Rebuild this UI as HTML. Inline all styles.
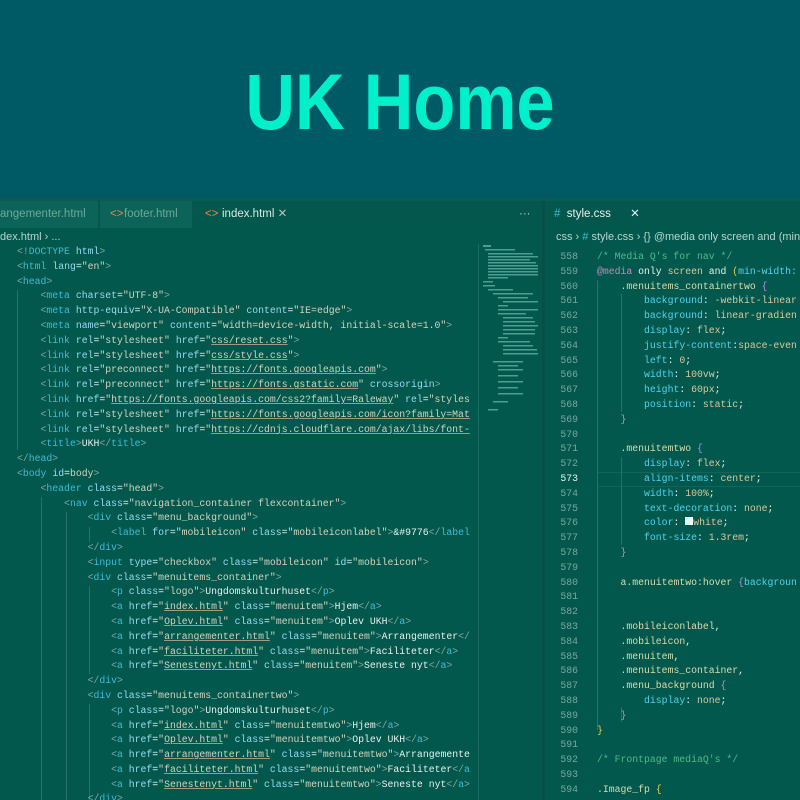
<!DOCTYPE html>
<html style="overflow:hidden;width:800px;height:800px"><head><meta charset="utf-8"><style>
*{margin:0;padding:0;box-sizing:border-box}
body{width:800px;height:800px;overflow:hidden;background:#03584d;position:relative;font-family:"Liberation Sans",sans-serif}
#top{position:absolute;left:0;top:0;width:800px;height:198px;background:#005a66}
#title{position:absolute;left:0;top:52px;width:800px;text-align:center;color:#00f0cc;font-weight:bold;font-size:79px;line-height:100px;transform:scaleX(0.87)}
#sep{position:absolute;left:0;top:198px;width:800px;height:3px;background:#0b5a55}
.tab{position:absolute;top:201px;height:27px;font-size:11.5px;line-height:27px;color:#7fb2a6;white-space:nowrap;overflow:hidden}
.crumb{position:absolute;top:229px;font-size:11px;line-height:16px;color:#b8d4cc;white-space:nowrap}
.code{position:absolute;font-family:"Liberation Mono",monospace;font-size:9.8px;line-height:14.8px;white-space:pre;color:#e8f0ec;overflow:hidden}
.b{color:#7fa8a2}.t{color:#3cbcd8}.a{color:#9ad8f0}.s{color:#d4d2bc}.u{color:#d4d2bc;text-decoration:underline;text-decoration-color:#a09a80}
.p{color:#4fd2ee}.v{color:#d8c89a}.sel{color:#d8dcaa}.c{color:#4fba86}.k{color:#c586c0}.y{color:#e6d040}.pu{color:#b58ad8}
.ln{position:absolute;left:545px;width:33px;text-align:right;font-family:"Liberation Mono",monospace;font-size:9.8px;line-height:14.8px;color:#7ba59c;white-space:pre}
.g{position:absolute;width:1px;background:#2a7066}
</style></head><body>
<div id="top"></div><div id="title">UK Home</div><div id="sep"></div>
<div style="position:absolute;left:0;top:201px;width:800px;height:27px;background:#04574c"></div>
<div class="tab" style="left:0;width:98px;background:#0b6457;color:#6fa89a">angementer.html</div>
<div class="tab" style="left:100px;width:92px;background:#0b6457;padding-left:24px;color:#6fa89a"><span style="color:#e08a4a;position:absolute;left:10px">&lt;&gt;</span>footer.html</div>
<div class="tab" style="left:195px;width:95px;padding-left:27px;color:#d8e8e2"><span style="color:#e08a4a;position:absolute;left:10px">&lt;&gt;</span>index.html <span style="color:#b0c8c0">&#10005;</span></div>
<div class="tab" style="left:519px;color:#b0c8c0">···</div>
<div style="position:absolute;left:542px;top:201px;width:3px;height:599px;background:#0a4f46"></div>
<div class="tab" style="left:554px;color:#e8f0ec"><span style="color:#3cbcd8">#</span>&nbsp; style.css &nbsp;&nbsp;&nbsp;&nbsp;&nbsp;<span style="color:#e8f0ec">&#10005;</span></div>
<div class="crumb" style="left:0">dex.html › ...</div>
<div class="crumb" style="left:556px">css › <span style="color:#3cbcd8">#</span> style.css › {} @media only screen and (min-</div>
<div style="position:absolute;left:478px;top:244px;width:1px;height:556px;background:#1d6b60"></div>
<svg style="position:absolute;left:483px;top:245px" width="55" height="170"><g fill="#4d9d90">
<rect x="0" y="0" width="8" height="2"/><rect x="2" y="4" width="30" height="1.5"/><rect x="5" y="8" width="45" height="1.5"/><rect x="5" y="11" width="50" height="1.5"/><rect x="5" y="14" width="42" height="1.5"/><rect x="5" y="17" width="48" height="1.5"/><rect x="5" y="20" width="50" height="1.5"/><rect x="5" y="23" width="50" height="1.5"/><rect x="5" y="26" width="50" height="1.5"/><rect x="5" y="29" width="50" height="1.5"/><rect x="5" y="32" width="20" height="1.5"/><rect x="0" y="36" width="10" height="1.5"/><rect x="0" y="40" width="12" height="1.5"/><rect x="5" y="44" width="25" height="1.5"/><rect x="10" y="48" width="40" height="1.5"/><rect x="15" y="52" width="30" height="1.5"/><rect x="20" y="56" width="50" height="1.5"/><rect x="15" y="60" width="10" height="1.5"/><rect x="15" y="64" width="42" height="1.5"/><rect x="15" y="68" width="28" height="1.5"/><rect x="20" y="72" width="30" height="1.5"/><rect x="20" y="76" width="32" height="1.5"/><rect x="20" y="80" width="36" height="1.5"/><rect x="20" y="84" width="32" height="1.5"/><rect x="20" y="88" width="32" height="1.5"/><rect x="15" y="92" width="10" height="1.5"/><rect x="15" y="96" width="32" height="1.5"/><rect x="20" y="100" width="30" height="1.5"/><rect x="20" y="104" width="34" height="1.5"/><rect x="20" y="108" width="36" height="1.5"/><rect x="10" y="116" width="30" height="1.5"/><rect x="15" y="120" width="20" height="1.5"/><rect x="15" y="124" width="25" height="1.5"/><rect x="15" y="130" width="20" height="1.5"/><rect x="15" y="136" width="25" height="1.5"/><rect x="15" y="142" width="20" height="1.5"/><rect x="15" y="148" width="25" height="1.5"/><rect x="10" y="156" width="15" height="1.5"/><rect x="5" y="164" width="10" height="1.5"/></g></svg>
<div class="g" style="left:17px;top:290px;height:160px"></div>
<div class="g" style="left:41px;top:497px;height:303px"></div>
<div class="g" style="left:66px;top:512px;height:288px"></div>
<div class="g" style="left:89px;top:527px;height:15px"></div>
<div class="g" style="left:89px;top:586px;height:88px"></div>
<div class="g" style="left:89px;top:704px;height:96px"></div>
<div class="code" style="left:17px;top:245px;width:461px;height:555px"><span class="b">&lt;!</span><span class="t">DOCTYPE</span> <span class="a">html</span><span class="b">&gt;</span>
<span class="b">&lt;</span><span class="t">html</span> <span class="a">lang</span>=<span class="s">"en"</span><span class="b">&gt;</span>
<span class="b">&lt;</span><span class="t">head</span><span class="b">&gt;</span>
    <span class="b">&lt;</span><span class="t">meta</span> <span class="a">charset</span>=<span class="s">"UTF-8"</span><span class="b">&gt;</span>
    <span class="b">&lt;</span><span class="t">meta</span> <span class="a">http-equiv</span>=<span class="s">"X-UA-Compatible"</span> <span class="a">content</span>=<span class="s">"IE=edge"</span><span class="b">&gt;</span>
    <span class="b">&lt;</span><span class="t">meta</span> <span class="a">name</span>=<span class="s">"viewport"</span> <span class="a">content</span>=<span class="s">"width=device-width, initial-scale=1.0"</span><span class="b">&gt;</span>
    <span class="b">&lt;</span><span class="t">link</span> <span class="a">rel</span>=<span class="s">"stylesheet"</span> <span class="a">href</span>=<span class="s">"<span class="u">css/reset.css</span>"</span><span class="b">&gt;</span>
    <span class="b">&lt;</span><span class="t">link</span> <span class="a">rel</span>=<span class="s">"stylesheet"</span> <span class="a">href</span>=<span class="s">"<span class="u">css/style.css</span>"</span><span class="b">&gt;</span>
    <span class="b">&lt;</span><span class="t">link</span> <span class="a">rel</span>=<span class="s">"preconnect"</span> <span class="a">href</span>=<span class="s">"<span class="u">https://fonts.googleapis.com</span>"</span><span class="b">&gt;</span>
    <span class="b">&lt;</span><span class="t">link</span> <span class="a">rel</span>=<span class="s">"preconnect"</span> <span class="a">href</span>=<span class="s">"<span class="u">https://fonts.gstatic.com</span>"</span> <span class="a">crossorigin</span><span class="b">&gt;</span>
    <span class="b">&lt;</span><span class="t">link</span> <span class="a">href</span>=<span class="s">"<span class="u">https://fonts.googleapis.com/css2?family=Raleway</span>"</span> <span class="a">rel</span>=<span class="s">"styles</span>
    <span class="b">&lt;</span><span class="t">link</span> <span class="a">rel</span>=<span class="s">"stylesheet"</span> <span class="a">href</span>=<span class="s">"<span class="u">https://fonts.googleapis.com/icon?family=Mat</span></span>
    <span class="b">&lt;</span><span class="t">link</span> <span class="a">rel</span>=<span class="s">"stylesheet"</span> <span class="a">href</span>=<span class="s">"<span class="u">https://cdnjs.cloudflare.com/ajax/libs/font-</span></span>
    <span class="b">&lt;</span><span class="t">title</span><span class="b">&gt;</span>UKH<span class="b">&lt;/</span><span class="t">title</span><span class="b">&gt;</span>
<span class="b">&lt;/</span><span class="t">head</span><span class="b">&gt;</span>
<span class="b">&lt;</span><span class="t">body</span> <span class="a">id</span>=<span class="s">body</span><span class="b">&gt;</span>
    <span class="b">&lt;</span><span class="t">header</span> <span class="a">class</span>=<span class="s">"head"</span><span class="b">&gt;</span>
        <span class="b">&lt;</span><span class="t">nav</span> <span class="a">class</span>=<span class="s">"navigation_container flexcontainer"</span><span class="b">&gt;</span>
            <span class="b">&lt;</span><span class="t">div</span> <span class="a">class</span>=<span class="s">"menu_background"</span><span class="b">&gt;</span>
                <span class="b">&lt;</span><span class="t">label</span> <span class="a">for</span>=<span class="s">"mobileicon"</span> <span class="a">class</span>=<span class="s">"mobileiconlabel"</span><span class="b">&gt;</span>&amp;#9776<span class="b">&lt;/</span><span class="t">label</span>
            <span class="b">&lt;/</span><span class="t">div</span><span class="b">&gt;</span>
            <span class="b">&lt;</span><span class="t">input</span> <span class="a">type</span>=<span class="s">"checkbox"</span> <span class="a">class</span>=<span class="s">"mobileicon"</span> <span class="a">id</span>=<span class="s">"mobileicon"</span><span class="b">&gt;</span>
            <span class="b">&lt;</span><span class="t">div</span> <span class="a">class</span>=<span class="s">"menuitems_container"</span><span class="b">&gt;</span>
                <span class="b">&lt;</span><span class="t">p</span> <span class="a">class</span>=<span class="s">"logo"</span><span class="b">&gt;</span>Ungdomskulturhuset<span class="b">&lt;/</span><span class="t">p</span><span class="b">&gt;</span>
                <span class="b">&lt;</span><span class="t">a</span> <span class="a">href</span>=<span class="s">"<span class="u">index.html</span>"</span> <span class="a">class</span>=<span class="s">"menuitem"</span><span class="b">&gt;</span>Hjem<span class="b">&lt;/</span><span class="t">a</span><span class="b">&gt;</span>
                <span class="b">&lt;</span><span class="t">a</span> <span class="a">href</span>=<span class="s">"<span class="u">Oplev.html</span>"</span> <span class="a">class</span>=<span class="s">"menuitem"</span><span class="b">&gt;</span>Oplev UKH<span class="b">&lt;/</span><span class="t">a</span><span class="b">&gt;</span>
                <span class="b">&lt;</span><span class="t">a</span> <span class="a">href</span>=<span class="s">"<span class="u">arrangementer.html</span>"</span> <span class="a">class</span>=<span class="s">"menuitem"</span><span class="b">&gt;</span>Arrangementer<span class="b">&lt;/</span>
                <span class="b">&lt;</span><span class="t">a</span> <span class="a">href</span>=<span class="s">"<span class="u">faciliteter.html</span>"</span> <span class="a">class</span>=<span class="s">"menuitem"</span><span class="b">&gt;</span>Faciliteter<span class="b">&lt;/</span><span class="t">a</span><span class="b">&gt;</span>
                <span class="b">&lt;</span><span class="t">a</span> <span class="a">href</span>=<span class="s">"<span class="u">Senestenyt.html</span>"</span> <span class="a">class</span>=<span class="s">"menuitem"</span><span class="b">&gt;</span>Seneste nyt<span class="b">&lt;/</span><span class="t">a</span><span class="b">&gt;</span>
            <span class="b">&lt;/</span><span class="t">div</span><span class="b">&gt;</span>
            <span class="b">&lt;</span><span class="t">div</span> <span class="a">class</span>=<span class="s">"menuitems_containertwo"</span><span class="b">&gt;</span>
                <span class="b">&lt;</span><span class="t">p</span> <span class="a">class</span>=<span class="s">"logo"</span><span class="b">&gt;</span>Ungdomskulturhuset<span class="b">&lt;/</span><span class="t">p</span><span class="b">&gt;</span>
                <span class="b">&lt;</span><span class="t">a</span> <span class="a">href</span>=<span class="s">"<span class="u">index.html</span>"</span> <span class="a">class</span>=<span class="s">"menuitemtwo"</span><span class="b">&gt;</span>Hjem<span class="b">&lt;/</span><span class="t">a</span><span class="b">&gt;</span>
                <span class="b">&lt;</span><span class="t">a</span> <span class="a">href</span>=<span class="s">"<span class="u">Oplev.html</span>"</span> <span class="a">class</span>=<span class="s">"menuitemtwo"</span><span class="b">&gt;</span>Oplev UKH<span class="b">&lt;/</span><span class="t">a</span><span class="b">&gt;</span>
                <span class="b">&lt;</span><span class="t">a</span> <span class="a">href</span>=<span class="s">"<span class="u">arrangementer.html</span>"</span> <span class="a">class</span>=<span class="s">"menuitemtwo"</span><span class="b">&gt;</span>Arrangemente
                <span class="b">&lt;</span><span class="t">a</span> <span class="a">href</span>=<span class="s">"<span class="u">faciliteter.html</span>"</span> <span class="a">class</span>=<span class="s">"menuitemtwo"</span><span class="b">&gt;</span>Faciliteter<span class="b">&lt;/</span><span class="t">a</span>
                <span class="b">&lt;</span><span class="t">a</span> <span class="a">href</span>=<span class="s">"<span class="u">Senestenyt.html</span>"</span> <span class="a">class</span>=<span class="s">"menuitemtwo"</span><span class="b">&gt;</span>Seneste nyt<span class="b">&lt;/</span><span class="t">a</span><span class="b">&gt;</span>
            <span class="b">&lt;/</span><span class="t">div</span><span class="b">&gt;</span></div>
<div class="ln" style="top:250px">558
559
560
561
562
563
564
565
566
567
568
569
570
571
572
<span style="color:#e8f0ec">573</span>
574
575
576
577
578
579
580
581
582
583
584
585
586
587
588
589
590
591
592
593
594</div>
<div style="position:absolute;left:597px;top:472px;width:203px;height:15px;border-top:1px solid #0e6659;border-bottom:1px solid #0e6659"></div>
<div class="g" style="left:597px;top:280px;height:450px"></div>
<div class="g" style="left:621px;top:294px;height:118px"></div>
<div class="g" style="left:621px;top:457px;height:88px"></div>
<div class="g" style="left:621px;top:707px;height:15px"></div>
<div class="code" style="left:597px;top:250px;width:203px;height:550px"><span class="c">/* Media Q's for nav */</span>
<span class="k">@media</span> only <span class="v">screen</span> and <span class="y">(</span><span class="p">min-width:</span>
    <span class="sel">.menuitems_containertwo</span> <span class="pu">{</span>
        <span class="p">background</span>: <span class="v">-webkit-linear</span>
        <span class="p">background</span>: <span class="v">linear-gradien</span>
        <span class="p">display</span>: <span class="v">flex</span>;
        <span class="p">justify-content</span>:<span class="v">space-even</span>
        <span class="p">left</span>: <span class="v">0</span>;
        <span class="p">width</span>: <span class="v">100vw</span>;
        <span class="p">height</span>: <span class="v">60px</span>;
        <span class="p">position</span>: <span class="v">static</span>;
    <span class="pu">}</span>

    <span class="sel">.menuitemtwo</span> <span class="pu">{</span>
        <span class="p">display</span>: <span class="v">flex</span>;
        <span class="p">align-items</span>: <span class="v">center</span>;
        <span class="p">width</span>: <span class="v">100%</span>;
        <span class="p">text-decoration</span>: <span class="v">none</span>;
        <span class="p">color</span>: <span style="display:inline-block;width:8px;height:8px;background:#d8fff4;border:1px solid #fff"></span><span class="v">white</span>;
        <span class="p">font-size</span>: <span class="v">1.3rem</span>;
    <span class="pu">}</span>

    <span class="sel">a.menuitemtwo:hover</span> <span class="pu">{</span><span class="p">backgroun</span>


    <span class="sel">.mobileiconlabel</span>,
    <span class="sel">.mobileicon</span>,
    <span class="sel">.menuitem</span>,
    <span class="sel">.menuitems_container</span>,
    <span class="sel">.menu_background</span> <span class="pu">{</span>
        <span class="p">display</span>: <span class="v">none</span>;
    <span class="pu">}</span>
<span class="y">}</span>

<span class="c">/* Frontpage mediaQ's */</span>

<span class="sel">.Image_fp</span> <span class="y">{</span></div>
</body></html>
